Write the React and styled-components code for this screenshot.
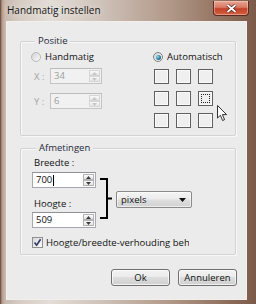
import styled, { createGlobalStyle } from "styled-components";

const GlobalStyle = createGlobalStyle`
  html, body {
    margin: 0;
    padding: 0;
  }
  body {
    width: 256px;
    height: 304px;
    overflow: hidden;
    font-family: "Open Sans", "Noto Sans", sans-serif;
    font-size: 9.5px;
    color: #111111;
  }
`;

const Window = styled.div`
  width: 256px;
  height: 304px;
  box-sizing: border-box;
  display: flex;
  flex-direction: column;
  background: linear-gradient(
    90deg,
    #5e4334 0px,
    #b69b8c 2px,
    #c9b8ad 5px,
    #d6ccc4 20px,
    #e3ddd7 50px,
    #cfc3ba 100px,
    #b19888 170px,
    #8d6b59 230px,
    #7b5a49 256px
  );
`;

const TitleBar = styled.div`
  height: 22px;
  flex: none;
  display: flex;
  align-items: flex-start;
  padding-left: 7px;
`;

const Title = styled.div`
  line-height: 21px;
  font-size: 10px;
  color: #141414;
  text-shadow: 0 0 6px rgba(255, 255, 255, 0.8);
`;

const CloseButton = styled.div`
  margin: 1px 7px 0 auto;
  width: 36px;
  height: 15px;
  box-sizing: border-box;
  border: 1px solid #5b2a20;
  border-top: none;
  border-radius: 0 0 4px 4px;
  background: linear-gradient(#e7a594 0%, #d97a63 45%, #c3412a 55%, #d4603f 100%);
  box-shadow: inset 0 0 0 1px rgba(255, 220, 210, 0.45);
  display: flex;
  align-items: center;
  justify-content: center;
`;

const Client = styled.div`
  flex: 1;
  margin: 0 10px 5px 7px;
  background: #ebebeb;
  box-shadow: 0 0 0 1px #f3efeb;
  padding: 19px 10px 0 13px;
  display: flex;
  flex-direction: column;
`;

const GroupBox = styled.div`
  position: relative;
  border: 1px solid #d3d3d3;
  border-radius: 2px;
  box-shadow: inset 1px 1px 0 #f8f8f8, 1px 1px 0 #f8f8f8;
  margin-top: ${(p) => p.$top || 0}px;
  padding: 0 0 ${(p) => p.$bottom}px ${(p) => p.$left}px;
`;

const GroupTitle = styled.div`
  width: fit-content;
  margin: -8px 0 0 4px;
  padding: 0 3px;
  line-height: 14px;
  background: #ebebeb;
  color: #1e2a3a;
`;

const PosGrid = styled.div`
  display: grid;
  grid-template-columns: 122px 1fr;
`;

const Column = styled.div`
  display: flex;
  flex-direction: column;
`;

const RadioRow = styled.div`
  margin-top: 3px;
  height: 12px;
  display: flex;
  align-items: center;
  gap: 4px;
  line-height: 12px;
`;

const Radio = styled.span`
  width: 10px;
  height: 10px;
  box-sizing: border-box;
  border-radius: 50%;
  border: 1px solid ${(p) => (p.$checked ? "#7c8187" : "#b9b9b9")};
  background: linear-gradient(135deg, #d2d2d2, #fbfbfb);
  display: flex;
  align-items: center;
  justify-content: center;

  &::after {
    content: "";
    display: ${(p) => (p.$checked ? "block" : "none")};
    width: 5px;
    height: 5px;
    border-radius: 50%;
    background: radial-gradient(circle at 35% 35%, #8fe0f0, #2a7a98 55%, #124a62);
  }
`;

const SpinRow = styled.div`
  margin-top: ${(p) => p.$top}px;
  display: flex;
  align-items: center;
`;

const AxisLabel = styled.span`
  width: 19px;
  padding-left: 3px;
  box-sizing: border-box;
  color: #a3a3a3;
`;

const SpinBox = styled.div`
  width: ${(p) => p.$width}px;
  height: 16px;
  margin-top: ${(p) => p.$top || 0}px;
  box-sizing: border-box;
  border: 1px solid ${(p) => (p.$disabled ? "#c4c4c4" : "#a5a8ae")};
  border-top-color: ${(p) => (p.$disabled ? "#bcbcbc" : "#8e9096")};
  background: ${(p) => (p.$disabled ? "#f1f1f1" : "#ffffff")};
  color: ${(p) => (p.$disabled ? "#9c9c9c" : "#111111")};
  display: flex;
  align-items: center;
  padding: 0 1px 0 3px;
`;

const SpinValue = styled.span`
  flex: 1;
  line-height: 14px;
  display: flex;
  align-items: center;
`;

const Caret = styled.span`
  width: 1px;
  height: 11px;
  margin-left: 1px;
  background: #000;
`;

const SpinButtons = styled.div`
  width: 11px;
  height: 12px;
  display: flex;
  flex-direction: column;
`;

const SpinButton = styled.div`
  flex: 1;
  box-sizing: border-box;
  border: 1px solid ${(p) => (p.$disabled ? "#d6d6d6" : "#b3b3b3")};
  background: linear-gradient(#fafafa, #e4e4e4);
  display: flex;
  align-items: center;
  justify-content: center;
`;

const PosSquares = styled.div`
  margin: 6px 0 0 1px;
  display: grid;
  grid-template-columns: repeat(3, 15px);
  grid-auto-rows: 15px;
  gap: 7px;
`;

const Square = styled.div`
  position: relative;
  box-sizing: border-box;
  border: 1px solid #5f5f5f;
  background: #efefef;
  box-shadow: inset 0 0 0 1px #fafafa;

  &::after {
    content: "";
    display: ${(p) => (p.$focus ? "block" : "none")};
    position: absolute;
    inset: 2px;
    border: 1px dotted #222;
  }
`;

const Pointer = styled.svg`
  position: absolute;
  left: 196px;
  top: 63px;
`;

const SizeRow = styled.div`
  display: flex;
`;

const Fields = styled.div`
  width: 64px;
  display: flex;
  flex-direction: column;
`;

const FieldLabel = styled.div`
  margin-top: ${(p) => p.$top}px;
  padding-left: 2px;
  line-height: 14px;
`;

const Side = styled.div`
  margin-left: 4px;
  padding-top: 23px;
  display: flex;
  align-items: flex-start;
`;

const Dropdown = styled.div`
  margin: 13px 0 0 4px;
  width: 76px;
  height: 17px;
  box-sizing: border-box;
  border: 1px solid #8a8a8a;
  border-radius: 2px;
  background: linear-gradient(#f4f4f4 0%, #ececec 48%, #dedede 52%, #d1d1d1 100%);
  box-shadow: inset 0 0 0 1px rgba(255, 255, 255, 0.6);
  display: flex;
  align-items: center;
  justify-content: space-between;
  padding: 0 5px 0 4px;
  line-height: 15px;
`;

const CheckRow = styled.div`
  margin-top: 9px;
  height: 11px;
  display: flex;
  align-items: center;
  gap: 3px;
`;

const CheckBox = styled.span`
  width: 11px;
  height: 11px;
  box-sizing: border-box;
  border: 1px solid #8f8f8f;
  background: linear-gradient(135deg, #d9d9d9, #fbfbfb);
  display: flex;
  align-items: center;
  justify-content: center;
`;

const CheckLabel = styled.span`
  width: 143px;
  overflow: hidden;
  white-space: nowrap;
  line-height: 13px;
`;

const ButtonRow = styled.div`
  margin: 14px -1px 0 0;
  display: flex;
  justify-content: flex-end;
  gap: 8px;
`;

const Button = styled.div`
  width: 59px;
  height: 17px;
  box-sizing: border-box;
  border: 1px solid #707070;
  border-radius: 3px;
  background: linear-gradient(#f2f2f2 0%, #ebebeb 50%, #dddddd 50%, #cfcfcf 100%);
  box-shadow: inset 0 0 0 1px rgba(255, 255, 255, 0.7);
  display: flex;
  align-items: center;
  justify-content: center;
  line-height: 15px;
`;

function Arrow({ up, disabled }) {
  return (
    <svg width="5" height="3" viewBox="0 0 5 3">
      <path
        d={up ? "M0 3 L2.5 0 L5 3 Z" : "M0 0 L2.5 3 L5 0 Z"}
        fill={disabled ? "#c6c6c6" : "#3c3c3c"}
      />
    </svg>
  );
}

function Spinner({ value, width, disabled, caret, top }) {
  return (
    <SpinBox $width={width} $disabled={disabled} $top={top}>
      <SpinValue>
        {value}
        {caret && <Caret />}
      </SpinValue>
      <SpinButtons>
        <SpinButton $disabled={disabled}>
          <Arrow up disabled={disabled} />
        </SpinButton>
        <SpinButton $disabled={disabled}>
          <Arrow disabled={disabled} />
        </SpinButton>
      </SpinButtons>
    </SpinBox>
  );
}

const squares = [0, 1, 2, 3, 4, 5, 6, 7, 8];

export default function App() {
  return (
    <>
      <GlobalStyle />
      <Window>
        <TitleBar>
          <Title>Handmatig instellen</Title>
          <CloseButton>
            <svg width="11" height="9" viewBox="0 0 11 9">
              <path d="M1.5 1 L9.5 8 M9.5 1 L1.5 8" stroke="#4a1a12" strokeWidth="3.2" />
              <path d="M1.5 1 L9.5 8 M9.5 1 L1.5 8" stroke="#ffffff" strokeWidth="1.8" />
            </svg>
          </CloseButton>
        </TitleBar>
        <Client>
          <GroupBox $top={0} $left={10} $bottom={7}>
            <GroupTitle>Positie</GroupTitle>
            <PosGrid>
              <Column>
                <RadioRow>
                  <Radio />
                  Handmatig
                </RadioRow>
                <SpinRow $top={5}>
                  <AxisLabel>X :</AxisLabel>
                  <Spinner value="34" width={52} disabled />
                </SpinRow>
                <SpinRow $top={9}>
                  <AxisLabel>Y :</AxisLabel>
                  <Spinner value="6" width={52} disabled />
                </SpinRow>
              </Column>
              <Column>
                <RadioRow>
                  <Radio $checked />
                  Automatisch
                </RadioRow>
                <PosSquares>
                  {squares.map((i) => (
                    <Square key={i} $focus={i === 5} />
                  ))}
                </PosSquares>
              </Column>
            </PosGrid>
            <Pointer width="11" height="17" viewBox="0 0 11 17">
              <path
                d="M0.5 0.5 L0.5 13 L3.4 10.3 L5.6 15.5 L7.6 14.6 L5.4 9.6 L9.6 9.6 Z"
                fill="#ffffff"
                stroke="#1a1a1a"
                strokeWidth="0.9"
                strokeLinejoin="round"
              />
            </Pointer>
          </GroupBox>

          <GroupBox $top={12} $left={11} $bottom={6}>
            <GroupTitle>Afmetingen</GroupTitle>
            <SizeRow>
              <Fields>
                <FieldLabel $top={1}>Breedte :</FieldLabel>
                <Spinner value="700" width={64} caret top={2} />
                <FieldLabel $top={9}>Hoogte :</FieldLabel>
                <Spinner value="509" width={64} top={1} />
              </Fields>
              <Side>
                <svg width="12" height="41" viewBox="0 0 12 41">
                  <path
                    d="M0 1 L7 1 L7 40 L0 40 M7 20.5 L12 20.5"
                    fill="none"
                    stroke="#000"
                    strokeWidth="2"
                  />
                </svg>
                <Dropdown>
                  pixels
                  <svg width="7" height="4" viewBox="0 0 7 4">
                    <path d="M0 0 L7 0 L3.5 4 Z" fill="#111" />
                  </svg>
                </Dropdown>
              </Side>
            </SizeRow>
            <CheckRow>
              <CheckBox>
                <svg width="9" height="9" viewBox="0 0 9 9">
                  <path
                    d="M1.5 4.6 L3.6 7.2 L7.6 1.2"
                    fill="none"
                    stroke="#2c3a66"
                    strokeWidth="1.6"
                  />
                </svg>
              </CheckBox>
              <CheckLabel>Hoogte/breedte-verhouding behouden</CheckLabel>
            </CheckRow>
          </GroupBox>

          <ButtonRow>
            <Button>Ok</Button>
            <Button>Annuleren</Button>
          </ButtonRow>
        </Client>
      </Window>
    </>
  );
}
